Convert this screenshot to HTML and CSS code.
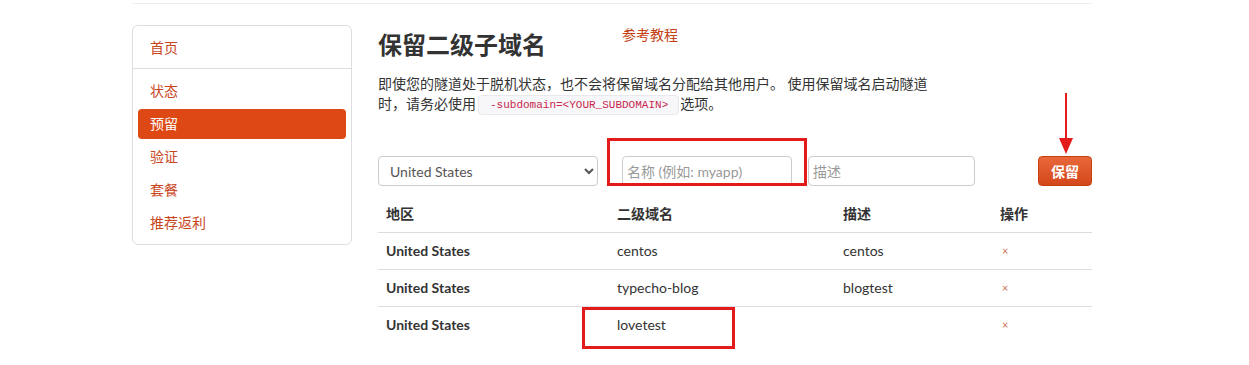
FILE: index.html
```html
<!DOCTYPE html>
<html lang="zh-CN">
<head>
  <meta charset="UTF-8" />
  <meta name="viewport" content="width=device-width, initial-scale=1.0" />
  <title>保留二级子域名</title>
  <link rel="stylesheet" href="styles.css">
</head>
<body>
  <div class="wrap">
    <div class="topbar"></div>

    <div class="layout">
      <!-- Menú lateral -->
      <aside class="side-nav">
        <div class="nav-group nav-home">
          <a class="nav-item" href="#">首页</a>
        </div>
        <div class="nav-group">
          <a class="nav-item" href="#">状态</a>
          <a class="nav-item active" href="#">预留</a>
          <a class="nav-item" href="#">验证</a>
          <a class="nav-item" href="#">套餐</a>
          <a class="nav-item" href="#">推荐返利</a>
        </div>
      </aside>

      <!-- Contenido -->
      <main class="main">
        <div class="page-head">
          <h1>保留二级子域名</h1>
          <a class="doc-link" href="#">参考教程</a>
        </div>
        <p class="intro">即使您的隧道处于脱机状态，也不会将保留域名分配给其他用户。 使用保留域名启动隧道时，请务必使用<code>-subdomain=&lt;YOUR_SUBDOMAIN&gt;</code>选项。</p>

        <form class="reserve-form">
          <select class="field field-region">
            <option>United States</option>
          </select>
          <input class="field field-name" type="text" placeholder="名称 (例如: myapp)">
          <input class="field field-desc" type="text" placeholder="描述">
          <button class="btn-reserve" type="button">保留</button>
        </form>

        <table class="domains">
          <thead>
            <tr>
              <th class="col-region">地区</th>
              <th class="col-name">二级域名</th>
              <th class="col-desc">描述</th>
              <th>操作</th>
            </tr>
          </thead>
          <tbody>
            <tr>
              <td class="region">United States</td>
              <td>centos</td>
              <td>centos</td>
              <td><a class="remove" href="#">×</a></td>
            </tr>
            <tr>
              <td class="region">United States</td>
              <td>typecho-blog</td>
              <td>blogtest</td>
              <td><a class="remove" href="#">×</a></td>
            </tr>
            <tr>
              <td class="region">United States</td>
              <td>lovetest</td>
              <td></td>
              <td><a class="remove" href="#">×</a></td>
            </tr>
          </tbody>
        </table>
      </main>
    </div>
  </div>

  <!-- Anotaciones rojas sobre la captura -->
  <div class="mark mark-name"></div>
  <div class="mark mark-row"></div>
  <div class="arrow"></div>
</body>
</html>
```

FILE: styles.css
```css
/* ======================
   Base
   ====================== */
*, *::before, *::after {
  box-sizing: border-box;
  margin: 0;
  padding: 0;
}
html, body {
  background-color: #fff;
  color: #333;
  font-family: Lato, "Noto Sans CJK SC", sans-serif;
  font-size: 14px;
  line-height: 20px;
}
a {
  text-decoration: none;
}

.wrap {
  width: 960px;
  margin-left: 132px;
}
.topbar {
  height: 4px;
  border-bottom: 1px solid #eee;
}
.layout {
  display: flex;
  align-items: flex-start;
  gap: 26px;
  margin-top: 21px;
}

/* ======================
   Menú lateral
   ====================== */
.side-nav {
  width: 220px;
  border: 1px solid #ddd;
  border-radius: 6px;
  flex-shrink: 0;
}
.nav-group {
  display: flex;
  flex-direction: column;
  gap: 3px;
  padding: 7px 5px 6px;
}
.nav-home {
  padding: 7px 5px 5px;
  border-bottom: 1px solid #ddd;
}
.nav-item {
  display: block;
  height: 30px;
  line-height: 30px;
  padding-left: 12px;
  color: #c9461c;
  border-radius: 4px;
}
.nav-item.active {
  background-color: #dd4814;
  color: #fff;
}

/* ======================
   Contenido
   ====================== */
.main {
  flex: 1;
}
.page-head {
  display: flex;
  align-items: flex-start;
}
.page-head h1 {
  font-size: 24px;
  line-height: 30px;
  font-weight: 700;
  color: #333;
  margin-top: 5px;
}
.doc-link {
  margin-left: 76px;
  line-height: 20px;
  color: #c34113;
}
.intro {
  margin-top: 14px;
  max-width: 560px;
}
.intro code {
  display: inline-block;
  vertical-align: top;
  height: 20px;
  line-height: 18px;
  font-family: "Liberation Mono", monospace;
  font-size: 11px;
  color: #c7254e;
  background-color: #f7f7f9;
  border: 1px solid #e8e8ee;
  border-radius: 4px;
  padding: 0 10px 0 11px;
  margin: 1px 1px 0 2px;
}

/* ======================
   Formulario
   ====================== */
.reserve-form {
  display: flex;
  align-items: center;
  margin-top: 41px;
}
.field {
  height: 30px;
  border: 1px solid #ccc;
  border-radius: 4px;
  font-family: Lato, "Noto Sans CJK SC", sans-serif;
  font-size: 14px;
  color: #555;
  background-color: #fff;
  padding: 0 4px;
}
.field::placeholder {
  color: #999;
}
.field-region {
  width: 220px;
  padding-left: 7px;
}
.field-name {
  width: 170px;
  margin-left: 24px;
}
.field-desc {
  width: 167px;
  margin-left: 16px;
}
.btn-reserve {
  margin-left: auto;
  width: 54px;
  height: 30px;
  border: 1px solid #c2410f;
  border-radius: 4px;
  background: linear-gradient(#e8683a, #d4471b);
  color: #fff;
  font-family: "Noto Sans CJK SC", sans-serif;
  font-size: 14px;
  font-weight: 700;
}

/* ======================
   Tabla
   ====================== */
.domains {
  width: 100%;
  margin-top: 10px;
  border-collapse: collapse;
}
.domains th,
.domains td {
  text-align: left;
  padding: 8px;
  height: 36px;
  line-height: 20px;
  vertical-align: middle;
}
.domains th {
  font-weight: 700;
}
.domains td {
  height: 37px;
  border-top: 1px solid #ddd;
}
.col-region { width: 231px; }
.col-name { width: 226px; }
.col-desc { width: 157px; }
.domains td.region {
  font-weight: 700;
}
.remove {
  display: inline-block;
  vertical-align: top;
  line-height: 20px;
  color: #c8704f;
  font-size: 11px;
  padding-left: 2px;
}

/* ======================
   Anotaciones
   ====================== */
.mark {
  position: absolute;
  border: 3px solid #e31b1b;
}
.mark-name {
  left: 607px;
  top: 138px;
  width: 200px;
  height: 48px;
}
.mark-row {
  left: 582px;
  top: 307px;
  width: 153px;
  height: 42px;
}
.arrow {
  position: absolute;
  left: 1065px;
  top: 93px;
  width: 2px;
  height: 50px;
  background-color: #e31b1b;
}
.arrow::after {
  content: '';
  position: absolute;
  left: -6px;
  bottom: -11px;
  border-left: 7px solid transparent;
  border-right: 7px solid transparent;
  border-top: 16px solid #e31b1b;
}
```
